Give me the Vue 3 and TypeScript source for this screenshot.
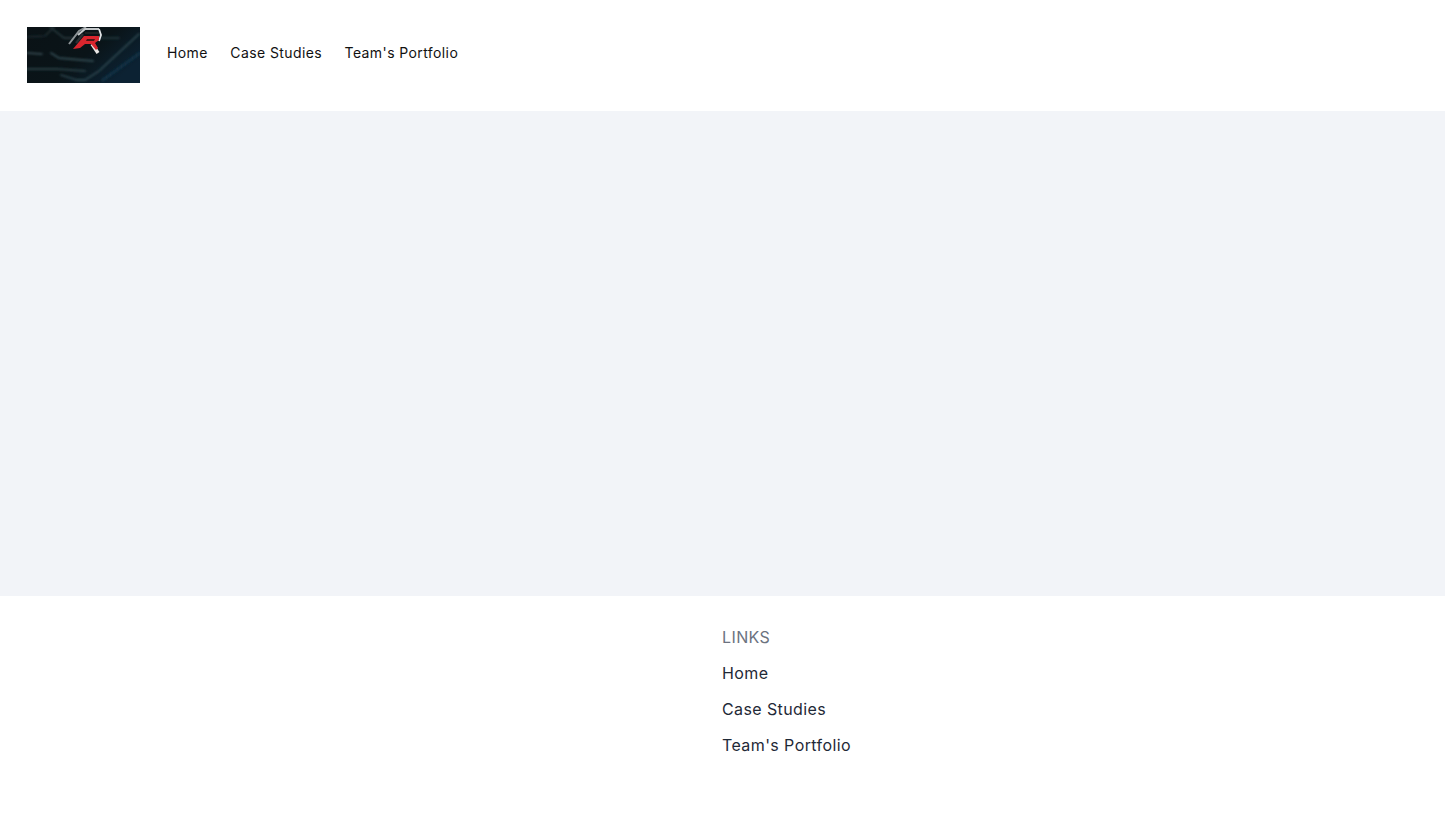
<script setup lang="ts">
const links: string[] = ['Home', 'Case Studies', "Team's Portfolio"]
</script>

<template>
  <div class="page">
    <header class="header">
      <svg class="logo" width="113" height="56" viewBox="0 0 113 56" role="img" aria-label="Logo">
        <defs>
          <linearGradient id="bg" x1="0" y1="0" x2="1" y2="0.6">
            <stop offset="0" stop-color="#0a1216" />
            <stop offset="0.6" stop-color="#0a1418" />
            <stop offset="1" stop-color="#0c2233" />
          </linearGradient>
          <filter id="soft" x="-5%" y="-5%" width="110%" height="110%">
            <feGaussianBlur stdDeviation="1" />
          </filter>
          <filter id="soft2" x="-20%" y="-20%" width="140%" height="140%">
            <feGaussianBlur stdDeviation="0.5" />
          </filter>
        </defs>
        <rect width="113" height="56" fill="url(#bg)" />
        <g filter="url(#soft)" fill="none" stroke-linecap="round">
          <path d="M0 10 L18 9 L27 0" stroke="#26363b" stroke-width="1.2" />
          <path d="M23 0 L37 11 L46 11" stroke="#2b3d42" stroke-width="1.5" />
          <path d="M74 11 L92 11" stroke="#2a3b40" stroke-width="1.6" />
          <path d="M0 26 L15 27" stroke="#3a5057" stroke-width="1.6" />
          <path d="M24 26 L32 31 L66 34" stroke="#2f464d" stroke-width="2" />
          <path d="M0 42 L30 42 L58 44" stroke="#263c43" stroke-width="2.2" />
          <path d="M34 48 L50 53 L58 53 L72 44 L112 7" stroke="#2a434b" stroke-width="1.8" />
          <path d="M76 53 L113 26" stroke="#123044" stroke-width="3" />
        </g>
        <g filter="url(#soft2)" fill="none">
          <path d="M42 17 L52 4 L59 0" stroke="#8d9396" stroke-width="2" />
          <path d="M51 8 L58 2 L72 2" stroke="#c4c8ca" stroke-width="2" />
          <path d="M49 16 L56 7" stroke="#2a3034" stroke-width="2.2" />
          <path d="M58 6 L72 6" stroke="#1c2024" stroke-width="2" />
          <path d="M72 2 L74 8 L72 14" stroke="#e2e4e5" stroke-width="1.8" />
          <path d="M65 17 L71 26" stroke="#e8e6e4" stroke-width="3.4" />
          <path d="M46 22 L53 21 L58 17 L64 17 L69 23 L71 21 L68 16 L72 13 L72 9 L57 9 Z" fill="#d9272f" stroke="none" />
          <path d="M60 12 L68 12 L67 14 L59 14 Z" fill="#4a1418" stroke="none" />
        </g>
      </svg>
      <nav class="nav">
        <a v-for="link in links" :key="link" class="nav-link">{{ link }}</a>
      </nav>
    </header>
    <main class="main"></main>
    <footer class="footer">
      <div class="col"></div>
      <div class="col">
        <h2 class="title">LINKS</h2>
        <a v-for="link in links" :key="link" class="foot-link">{{ link }}</a>
      </div>
    </footer>
  </div>
</template>

<style>
html, body { margin: 0; background: #fff; }
</style>

<style scoped>
.page {
  height: 813px;
  display: flex;
  flex-direction: column;
  font-family: Inter, "Liberation Sans", sans-serif;
  letter-spacing: 0.025em;
  background: #fff;
  overflow: hidden;
}
.header {
  flex: none;
  padding: 27px 27px 28px;
  display: flex;
  align-items: center;
  gap: 27px;
}
.logo { display: block; flex: none; }
.nav { display: flex; gap: 22.5px; margin-top: -4px; }
.nav-link { font-size: 14px; line-height: 20px; color: #111; }
.main { height: 485px; background: #f2f4f8; flex: none; }
.footer {
  flex: 1;
  display: grid;
  grid-template-columns: 722px 1fr;
  padding-top: 23px;
}
.col { display: flex; flex-direction: column; }
.title {
  margin: 0;
  font-size: 16px;
  font-weight: 400;
  line-height: 36px;
  color: #6b7280;
}
.foot-link { font-size: 16px; line-height: 36px; color: #1f2937; }
</style>
